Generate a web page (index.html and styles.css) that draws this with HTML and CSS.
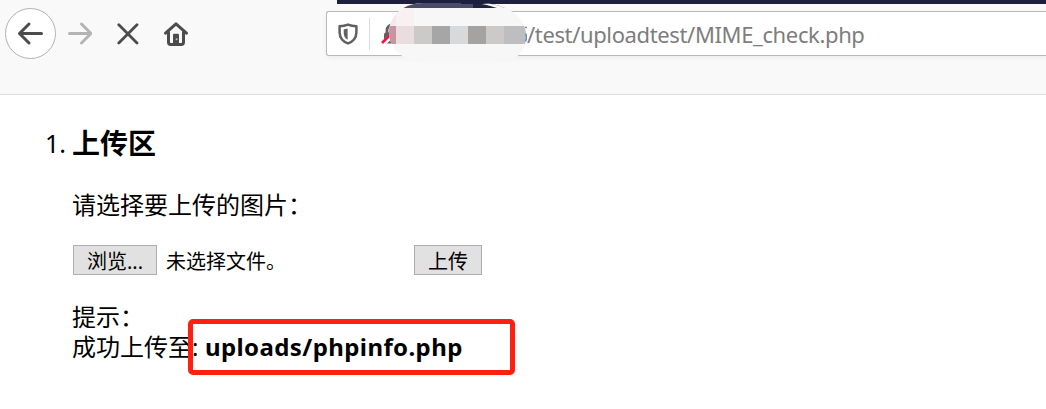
FILE: index.html
```html
<!DOCTYPE html>
<html lang="zh-CN">
<head>
<meta charset="utf-8">
<title>MIME_check.php</title>
<link rel="stylesheet" href="styles.css">
</head>
<body>
<header class="chrome">
  <div class="tabstrip"></div>
  <div class="toolbar">
    <nav class="nav">
      <span class="back"><svg width="51" height="51" viewBox="0 0 51 51" fill="none"><circle cx="25.5" cy="25.5" r="25" fill="#fff" stroke="#b1b1b1"/><path d="M36.500 25.500H14.500M24 16l-9.500 9.500 9.500 9.500" stroke="#4c4c4d" stroke-width="3" stroke-linecap="round" stroke-linejoin="round"/></svg></span>
      <svg class="forward" width="24" height="24" viewBox="0 0 24 24" fill="none" stroke="#b4b4b4" stroke-width="3" stroke-linecap="round" stroke-linejoin="round"><path d="M1.500 11.500H22M13.500 2L23 11.500l-9.500 9.500"/></svg>
      <svg class="stop" width="22" height="22" viewBox="0 0 22 22" fill="none" stroke="#4c4c4d" stroke-width="2.800" stroke-linecap="round"><path d="M1.800 1.800L20 20M20 1.800L1.800 20"/></svg>
      <svg class="home" width="24" height="24" viewBox="0 0 24 24" fill="none" stroke="#4c4c4d" stroke-width="3" stroke-linecap="round" stroke-linejoin="round"><path d="M1.600 11.200L12 1.800l10.400 9.400M4.500 10v10.200q0 2.200 2.200 2.200h10.600q2.200 0 2.200-2.200V10"/><path fill="#4c4c4d" stroke="none" d="M9 23V13q0-1.200 1.200-1.200h3.600q1.200 0 1.200 1.200v10z"/><circle cx="12.600" cy="17.200" r="1" fill="#bbb" stroke="none"/></svg>
    </nav>
    <div class="urlbar">
      <svg class="shield" width="20" height="22" viewBox="0 0 20 22"><path d="M10 1.600C7.200 2.800 4.600 3.200 1.600 3.300V9.500C1.800 15 4.500 18.500 10 20.400 15.500 18.500 18.200 15 18.400 9.500V3.300C15.400 3.200 12.800 2.800 10 1.600Z" fill="none" stroke="#606060" stroke-width="2.500" stroke-linejoin="round"/><path d="M9.600 5.500v11.200C7 15.400 5.800 13.200 5.700 9.800V6.500z" fill="#606060"/></svg>
      <span class="divider"></span>
      <svg class="lock" width="22" height="22" viewBox="0 0 22 22"><path d="M6 11V7a5 5 0 0 1 10 0v4" fill="none" stroke="#606060" stroke-width="2.800"/><rect x="3" y="9.500" width="16" height="11" rx="2" fill="#606060"/><path d="M1 22L20 3" stroke="#fff" stroke-width="5"/><path d="M1 20L20 1" stroke="#f5114a" stroke-width="2.600"/></svg>
      <span class="url">/test/uploadtest/MIME_check.php</span>
    </div>
  </div>
  <svg class="smudge" width="138" height="60" viewBox="0 0 138 60">
    <defs><clipPath id="blob"><path d="M34 0H90C112 0 137 10 137 33 137 49 127 60 104 60H34C13 58 0 45 0 29 0 14 13 0 34 0Z"/></clipPath></defs>
    <g clip-path="url(#blob)">
      <path d="M0 0H138V60H0z" fill="#f7f7f7"/>
      <path d="M0 5H7V23H0z" fill="#f1e9eb"/><path d="M7 5H25V23H7z" fill="#f8f0f1"/>
      <path d="M0 0H138V5H8z" fill="#4a4b69"/>
      <path d="M84 0Q100 2 107 5L84 5z" fill="#202240"/>
      <path d="M88 0H138V5H108Q98 1.500 88 0z" fill="#f7f7f7"/>
      <path d="M72 0H138V1H72z" fill="#1d1f3e"/>
      <g shape-rendering="crispEdges">
        <path d="M0 23h7v18H0z" fill="#c794a0"/><path d="M7 23h18v18H7z" fill="#e9dde0"/>
        <path d="M25 23h18v18H25zM97 23h18v18H97z" fill="#cbcac8"/><path d="M43 23h18v18H43z" fill="#a6a6a6"/>
        <path d="M61 23h18v18H61z" fill="#d7d9db"/><path d="M79 23h18v18H79z" fill="#a5a3a1"/>
        <path d="M115 23h22v18H115z" fill="#bebec0"/>
      </g>
    </g>
    <path d="M136 24.500h2M136.500 30.500q2 3 0 8" fill="none" stroke="#5e93bd" stroke-width="1.500"/>
  </svg>
</header>
<main class="page">
  <div class="number">1.</div>
  <section class="content">
    <h3 class="title">上传区</h3>
    <p class="prompt">请选择要上传的图片：</p>
    <form class="upload">
      <button class="btn browse" type="button">浏览...</button>
      <span class="status">未选择文件。</span>
      <button class="btn submit" type="button">上传</button>
    </form>
    <div class="hint">提示：</div>
    <div class="result">成功上传至<span class="colon">:</span><b class="path">uploads/phpinfo.php</b></div>
  </section>
  <div class="highlight"></div>
</main>
</body>
</html>
```
FILE: styles.css
```css
* { box-sizing: border-box; }
body {
  margin: 0;
  height: 409px;
  overflow: hidden;
  background: #fff;
  color: #000;
  font-family: "Noto Sans", "Noto Sans CJK SC", sans-serif;
}
svg { display: block; flex: none; }
.chrome {
  position: relative;
  height: 95px;
  background: #f9f9fa;
  border-bottom: 1px solid #dcdcdd;
}
.tabstrip { height: 4px; margin-left: 337px; background: #1d1f3e; }
.toolbar { display: flex; align-items: flex-start; }
.nav { display: flex; align-items: center; width: 326px; height: 51px; padding-left: 5px; margin-top: 4px; }
.forward { margin-left: 12px; }
.stop { margin-left: 25px; }
.home { margin-left: 25px; }
.urlbar {
  display: flex;
  align-items: center;
  flex: 1;
  height: 45px;
  margin-top: 7px;
  background: #fff;
  border: 1px solid #b9b9ba;
  border-right: 0;
  border-radius: 3px 0 0 3px;
  box-shadow: 0 2px 5px rgba(0, 0, 0, .05);
}
.shield { margin-left: 11px; }
.divider { width: 1px; height: 32px; margin: 0 11px; background: #dcdcdd; }
.lock { margin-top: 1px; }
.url {
  margin-left: 124px;
  font-size: 22px;
  line-height: 30px;
  letter-spacing: -.37px;
  white-space: nowrap;
  color: #7d7d7d;
}
.smudge { position: absolute; left: 389px; top: 3px; }
.page { position: relative; display: flex; height: 314px; }
.number { width: 72px; padding: 30px 6px 0 0; text-align: right; font-size: 25px; line-height: 36px; }
.content { padding-top: 28px; }
.title { margin: 0; font-size: 28px; line-height: 40px; font-weight: 700; }
.prompt { margin: 24px 0 0; font-size: 24px; line-height: 36px; }
.upload { display: flex; height: 30px; margin: 22px 0 0 1px; }
.btn {
  height: 30px;
  padding: 2px 0 0;
  border: 1px solid #adadad;
  border-radius: 0;
  background: #e1e1e1;
  color: #000;
  font: 20px/28px "Noto Sans", "Noto Sans CJK SC", sans-serif;
}
.browse { width: 84px; }
.status { width: 257px; padding: 2px 0 0 9px; font-size: 20px; line-height: 30px; }
.submit { width: 68px; }
.hint { margin-top: 26px; font-size: 24px; line-height: 31px; }
.result { display: flex; font-size: 24px; line-height: 30px; }
.colon { width: 13px; }
.path { font-weight: 700; letter-spacing: .4px; }
.highlight {
  position: absolute;
  left: 188px;
  top: 224px;
  width: 327px;
  height: 56px;
  border: 5px solid #ff2012;
  border-radius: 5px;
}
```
